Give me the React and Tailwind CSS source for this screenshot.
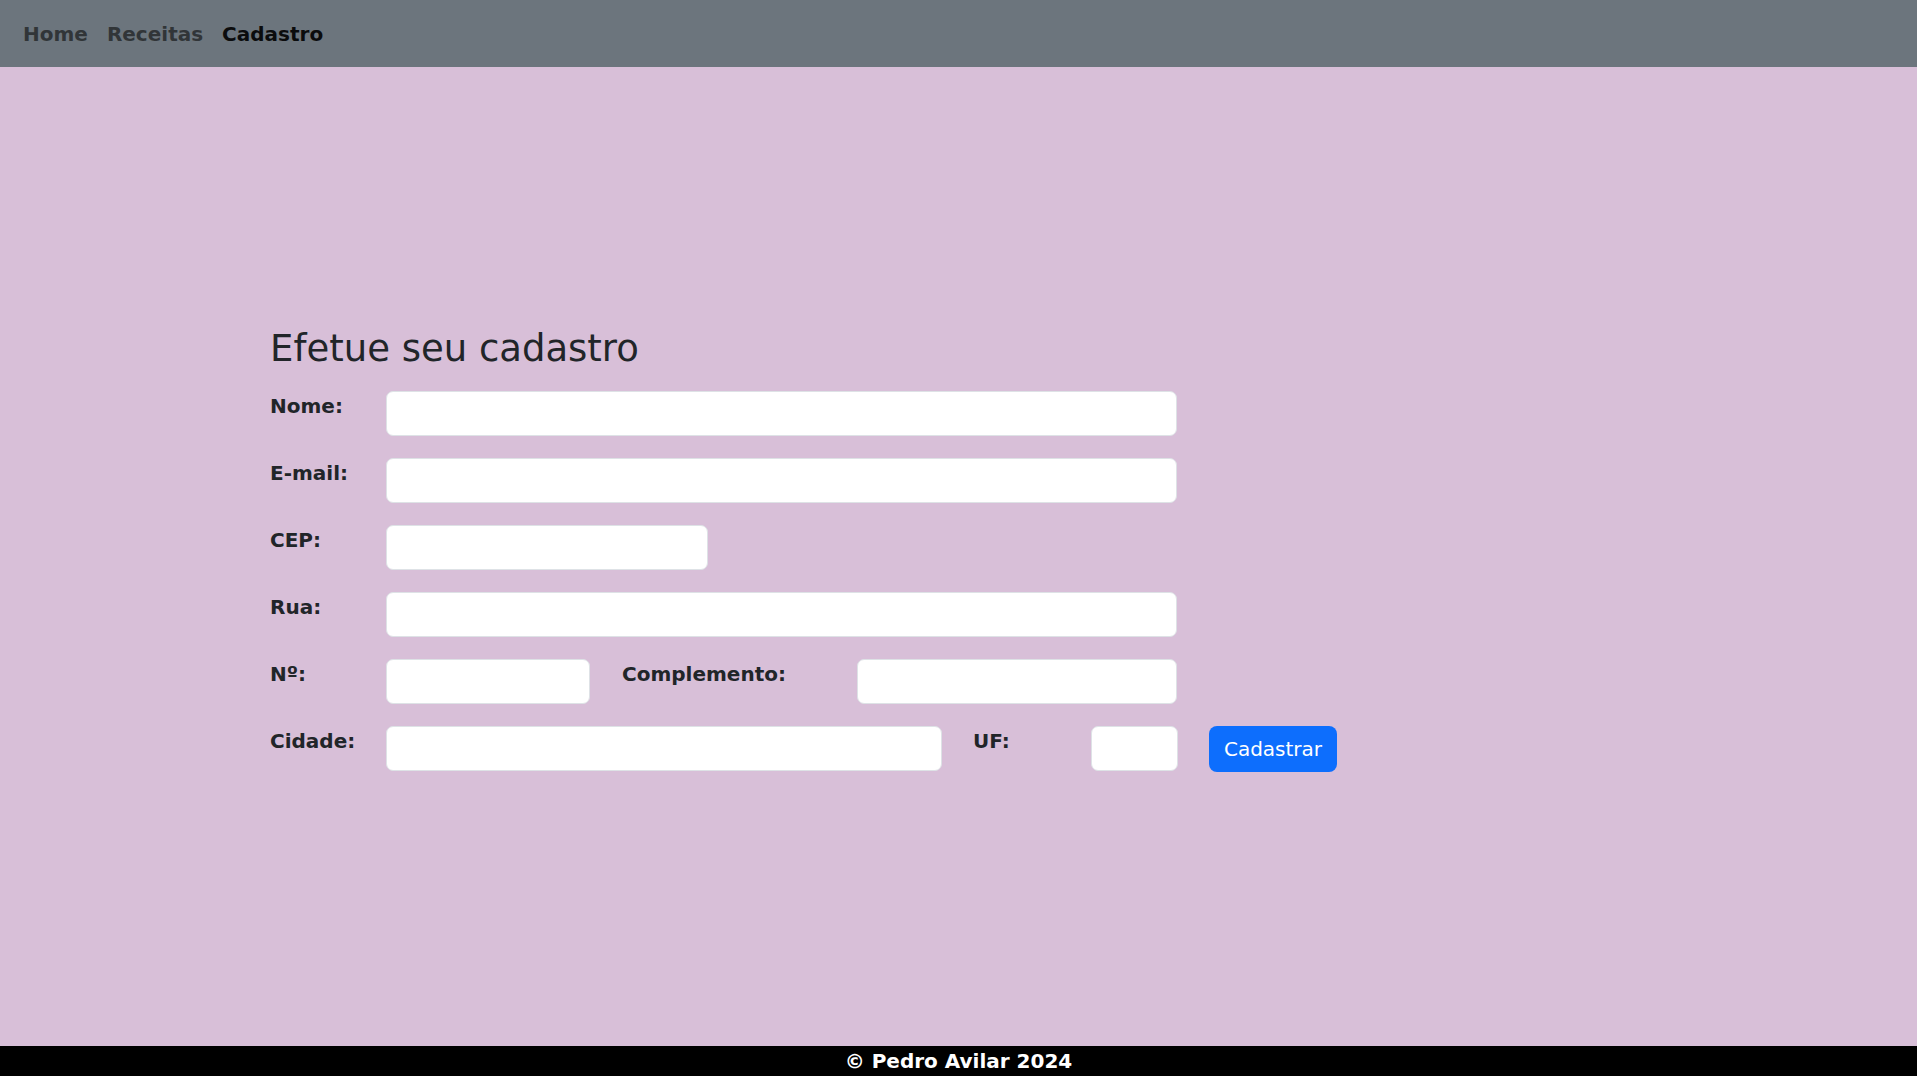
export default function App() {
  const label = 'text-[20px] leading-[30px] font-bold text-[#212529]'
  const input =
    'h-[45px] bg-white border border-[#dee2e6] rounded-[7px] px-3 text-[20px] outline-none'

  return (
    <div
      className="min-h-screen flex flex-col bg-[#d8bfd8]"
      style={{ fontFamily: '"DejaVu Sans", sans-serif' }}
    >
      {/* Top navbar */}
      <nav className="h-[67px] bg-[#6c757d] flex items-center pl-[23px] gap-[19px] text-[20px] leading-[30px] font-bold">
        <a className="text-[#313538]">Home</a>
        <a className="text-[#313538]">Receitas</a>
        <a className="text-[#0b0c0d]">Cadastro</a>
      </nav>

      <main className="flex-1 pl-[270px] pt-[259px]">
        <h2 className="text-[37px] leading-[46px] font-normal text-[#212529] mb-[19px]">
          Efetue seu cadastro
        </h2>

        <form className="flex flex-col gap-[22px]" onSubmit={(e) => e.preventDefault()}>
          <div className="flex items-start">
            <label className={`${label} w-[116px]`}>Nome:</label>
            <input className={`${input} w-[791px]`} />
          </div>

          <div className="flex items-start">
            <label className={`${label} w-[116px]`}>E-mail:</label>
            <input className={`${input} w-[791px]`} />
          </div>

          <div className="flex items-start">
            <label className={`${label} w-[116px]`}>CEP:</label>
            <input className={`${input} w-[322px]`} />
          </div>

          <div className="flex items-start">
            <label className={`${label} w-[116px]`}>Rua:</label>
            <input className={`${input} w-[791px]`} />
          </div>

          <div className="flex items-start">
            <label className={`${label} w-[116px]`}>Nº:</label>
            <input className={`${input} w-[204px]`} />
            <label className={`${label} w-[235px] ml-[32px]`}>Complemento:</label>
            <input className={`${input} w-[320px]`} />
          </div>

          <div className="flex items-start">
            <label className={`${label} w-[116px]`}>Cidade:</label>
            <input className={`${input} w-[556px]`} />
            <label className={`${label} w-[118px] ml-[31px]`}>UF:</label>
            <input className={`${input} w-[87px]`} />
            <button
              type="submit"
              className="ml-[31px] h-[46px] w-[128px] rounded-[8px] bg-[#0d6efd] text-white text-[20px] leading-[30px]"
            >
              Cadastrar
            </button>
          </div>
        </form>
      </main>

      <footer className="h-[30px] bg-black text-white text-center text-[20px] leading-[30px] font-bold">
        © Pedro Avilar 2024
      </footer>
    </div>
  )
}
